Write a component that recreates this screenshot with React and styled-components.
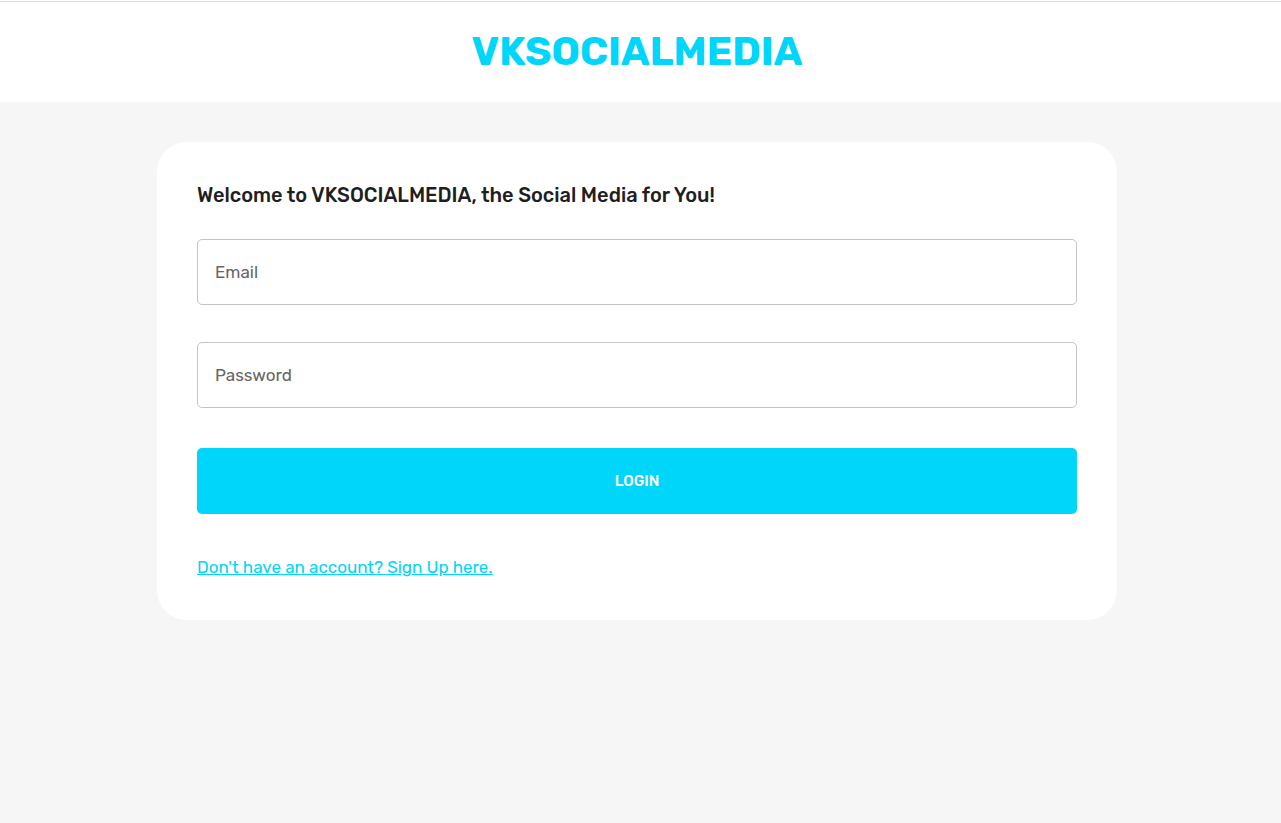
import React from "react";
import styled, { createGlobalStyle } from "styled-components";

const GlobalStyle = createGlobalStyle`
  *, *::before, *::after { box-sizing: border-box; }
  body {
    margin: 0;
    background: #f6f6f6;
    color: #1f1f1f;
    font-family: Rubik, Inter, "Liberation Sans", sans-serif;
    font-size: 17px;
    line-height: 26px;
  }
`;

const Page = styled.div`
  min-height: 100vh;
  background: #f6f6f6;
`;

const Header = styled.header`
  padding-top: 1px;
  background: #ffffff;
`;

const Brand = styled.h1`
  margin: 0;
  padding: 23px 7px 24px 0;
  border-top: 1px solid #dcdcdc;
  color: #00d5fa;
  font-size: 40px;
  font-weight: 700;
  line-height: 53px;
  text-align: center;
`;

const Content = styled.main`
  display: flex;
  justify-content: center;
  padding: 40px 23px 40px 16px;
`;

const Card = styled.section`
  width: 100%;
  max-width: 960px;
  padding: 40px;
  border-radius: 30px;
  background: #ffffff;
`;

const Welcome = styled.h2`
  margin: 0 0 30px;
  font-size: 20px;
  font-weight: 500;
  line-height: 27px;
`;

const Form = styled.form`
  display: grid;
  gap: 40px;
`;

const Fields = styled.div`
  display: grid;
  gap: 37px;
`;

const Field = styled.input`
  display: block;
  width: 100%;
  height: 66px;
  padding: 0 17px;
  border: 1px solid #c4c4c4;
  border-radius: 5px;
  background: #ffffff;
  color: #1f1f1f;
  font: inherit;
  &::placeholder { color: #666666; opacity: 1; }
  &:focus { outline: 2px solid #00d5fa; }
`;

const Login = styled.button`
  width: 100%;
  height: 66px;
  border: 0;
  border-radius: 5px;
  background: #00d5fa;
  color: #ffffff;
  font: inherit;
  font-size: 15px;
  font-weight: 500;
  cursor: pointer;
`;

const SignUp = styled.a`
  justify-self: start;
  color: #00d5fa;
`;

export default function App() {
  return (
    <>
      <GlobalStyle />
      <Page>
        <Header>
          <Brand>VKSOCIALMEDIA</Brand>
        </Header>
        <Content>
          <Card>
            <Welcome>Welcome to VKSOCIALMEDIA, the Social Media for You!</Welcome>
            <Form onSubmit={(event) => event.preventDefault()}>
              <Fields>
                <Field type="email" name="email" aria-label="Email" placeholder="Email" />
                <Field type="password" name="password" aria-label="Password" placeholder="Password" />
              </Fields>
              <Login type="submit">LOGIN</Login>
              <SignUp href="#signup">Don't have an account? Sign Up here.</SignUp>
            </Form>
          </Card>
        </Content>
      </Page>
    </>
  );
}
